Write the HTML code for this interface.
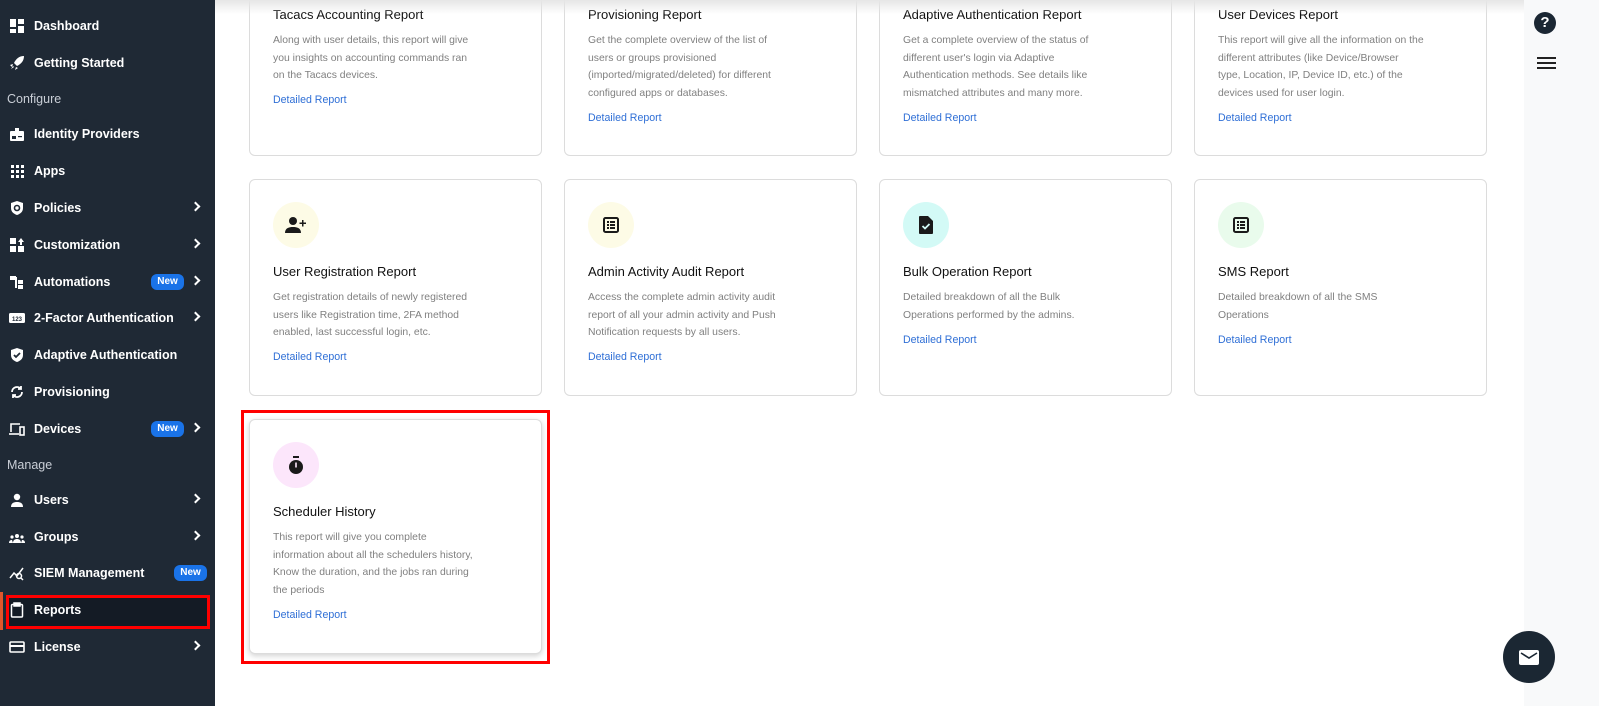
<!DOCTYPE html>
<html><head><meta charset="utf-8">
<style>
*{margin:0;padding:0;box-sizing:border-box}
body{width:1599px;height:706px;overflow:hidden;background:#fff;font-family:"Liberation Sans",sans-serif;position:relative}
.sb{position:absolute;left:0;top:0;width:215px;height:706px;background:#1f2935}
.it{position:absolute;left:0;width:215px;height:30px;color:#fff;font-size:12.5px;font-weight:bold;line-height:30px}
.it .tx{position:absolute;left:34px;top:0}
.it .ic{position:absolute;left:9px;top:7px;width:16px;height:16px}
.it .ch{position:absolute;left:192px;top:10px;width:7px;height:7px;border-right:2px solid #fff;border-top:2px solid #fff;transform:rotate(45deg)}
.new{position:absolute;top:7px;width:33px;height:16px;border-radius:6px;background:#1a73e8;color:#fff;font-size:10px;line-height:16px;text-align:center;font-weight:bold}
.sec{position:absolute;left:7px;color:#c9ced6;font-size:12.5px}
.card{position:absolute;width:293px;border:1px solid #dcdcdc;border-radius:6px;background:#fff;padding-left:23px}
.card .icn{margin-top:22px;width:46px;height:46px;border-radius:50%;display:flex;align-items:center;justify-content:center}
.card h3{margin-top:15px;font-size:13px;font-weight:normal;color:#111;line-height:18px;white-space:nowrap}
.card p{margin-top:8px;font-size:10.4px;color:#808080;line-height:17.5px;white-space:nowrap}
.card a{display:block;margin-top:7.75px;font-size:10.6px;color:#2f6fd6;line-height:17px;text-decoration:none}
.topsh{position:absolute;left:215px;top:0;width:1309px;height:14px;background:linear-gradient(#e6e6e6,rgba(255,255,255,0));}
.right{position:absolute;left:1524px;top:0;width:75px;height:706px;background:#f8f9fa}
</style></head><body>
<div class="sb">
 <div class="it" style="top:11px"><svg class="ic" viewBox="0 0 16 16"><rect x="1" y="1" width="6" height="8" fill="#fff"/><rect x="9" y="1" width="6" height="5" fill="#fff"/><rect x="1" y="11" width="6" height="4" fill="#fff"/><rect x="9" y="8" width="6" height="7" fill="#fff"/></svg><span class="tx">Dashboard</span></div>
 <div class="it" style="top:48px"><svg class="ic" viewBox="0 0 16 16"><path d="M15 1C10 1 7 4 5 8l3 3c4-2 7-5 7-10zM4 9l-3 1 2 2zM7 12l-1 3 3-2zM2 14l2-3 1 1z" fill="#fff"/></svg><span class="tx">Getting Started</span></div>
 <div class="sec" style="top:92px">Configure</div>
 <div class="it" style="top:119px"><svg class="ic" viewBox="0 0 16 16"><rect x="1" y="5" width="14" height="10" rx="1" fill="#fff"/><rect x="6" y="2" width="4" height="5" fill="#fff"/><rect x="3" y="10" width="4" height="3" fill="#1f2935"/><rect x="9" y="10" width="4" height="1.2" fill="#1f2935"/></svg><span class="tx">Identity Providers</span></div>
 <div class="it" style="top:156px"><svg class="ic" viewBox="0 0 16 16" fill="#fff"><rect x="2" y="2" width="3" height="3"/><rect x="7" y="2" width="3" height="3"/><rect x="12" y="2" width="3" height="3"/><rect x="2" y="7" width="3" height="3"/><rect x="7" y="7" width="3" height="3"/><rect x="12" y="7" width="3" height="3"/><rect x="2" y="12" width="3" height="3"/><rect x="7" y="12" width="3" height="3"/><rect x="12" y="12" width="3" height="3"/></svg><span class="tx">Apps</span></div>
 <div class="it" style="top:193px"><svg class="ic" viewBox="0 0 16 16"><path d="M8 1l6 2v5c0 4-3 6-6 7-3-1-6-3-6-7V3z" fill="#fff"/><circle cx="8" cy="8" r="2.5" fill="none" stroke="#1f2935" stroke-width="1.6"/></svg><span class="tx">Policies</span><span class="ch"></span></div>
 <div class="it" style="top:230px"><svg class="ic" viewBox="0 0 16 16" fill="#fff"><rect x="1" y="1" width="6" height="6"/><rect x="1" y="9" width="6" height="6"/><rect x="9" y="9" width="6" height="6"/><path d="M12 1l3 4h-6z"/><rect x="11" y="4" width="2" height="4"/></svg><span class="tx">Customization</span><span class="ch"></span></div>
 <div class="it" style="top:267px"><svg class="ic" viewBox="0 0 16 16" fill="#fff"><rect x="1" y="2" width="6" height="4"/><rect x="9" y="6" width="5" height="4"/><rect x="9" y="11" width="5" height="4"/><rect x="6" y="3" width="2" height="11"/></svg><span class="tx">Automations</span><span class="new" style="left:151px">New</span><span class="ch"></span></div>
 <div class="it" style="top:303px"><svg class="ic" viewBox="0 0 16 16"><rect x="0" y="3" width="16" height="10" rx="1.5" fill="#fff"/><text x="8" y="11" font-size="6" text-anchor="middle" fill="#1f2935" font-family="Liberation Sans" font-weight="bold">123</text></svg><span class="tx">2-Factor Authentication</span><span class="ch"></span></div>
 <div class="it" style="top:340px"><svg class="ic" viewBox="0 0 16 16"><path d="M8 1l6 2v5c0 4-3 6-6 7-3-1-6-3-6-7V3z" fill="#fff"/><path d="M5 8l2 2 4-4" stroke="#1f2935" stroke-width="1.8" fill="none"/></svg><span class="tx">Adaptive Authentication</span></div>
 <div class="it" style="top:377px"><svg class="ic" viewBox="0 0 16 16" fill="none" stroke="#fff" stroke-width="1.8"><path d="M3 8a5 5 0 0 1 9-3M13 8a5 5 0 0 1-9 3"/><path d="M12 2v3H9M4 14v-3h3"/></svg><span class="tx">Provisioning</span></div>
 <div class="it" style="top:414px"><svg class="ic" viewBox="0 0 16 16" fill="none" stroke="#fff" stroke-width="1.6"><path d="M2 11V3h9"/><path d="M0 13h10"/><rect x="11" y="6" width="4" height="8"/></svg><span class="tx">Devices</span><span class="new" style="left:151px">New</span><span class="ch"></span></div>
 <div class="sec" style="top:458px">Manage</div>
 <div class="it" style="top:485px"><svg class="ic" viewBox="0 0 16 16" fill="#fff"><circle cx="8" cy="5" r="3.2"/><path d="M2 15c0-4 3-5 6-5s6 1 6 5z"/></svg><span class="tx">Users</span><span class="ch"></span></div>
 <div class="it" style="top:522px"><svg class="ic" viewBox="0 0 16 16" fill="#fff"><circle cx="8" cy="7" r="2"/><circle cx="3" cy="8" r="1.6"/><circle cx="13" cy="8" r="1.6"/><path d="M4 14c0-3 2-4 4-4s4 1 4 4zM0 14c0-2 1-3 3-3l1 3zM16 14c0-2-1-3-3-3l-1 3z"/></svg><span class="tx">Groups</span><span class="ch"></span></div>
 <div class="it" style="top:558px"><svg class="ic" viewBox="0 0 16 16" fill="none" stroke="#fff" stroke-width="1.5"><path d="M1 13l4-5 3 3 6-8"/><circle cx="10" cy="11" r="2.5"/><path d="M12 13l2 2"/></svg><span class="tx">SIEM Management</span><span class="new" style="left:174px">New</span></div>
 <div style="position:absolute;left:0;top:592px;width:3px;height:38px;background:#e0562b"></div>
 <div style="position:absolute;left:6px;top:595px;width:204px;height:34px;background:#141b25;border:3px solid #f00"></div>
 <div class="it" style="top:595px"><svg class="ic" viewBox="0 0 16 16" fill="none" stroke="#fff" stroke-width="1.5"><rect x="2.5" y="2.5" width="11" height="12.5" rx="1"/><rect x="5" y="1" width="6" height="3" fill="#fff"/></svg><span class="tx">Reports</span></div>
 <div class="it" style="top:632px"><svg class="ic" viewBox="0 0 16 16" fill="none" stroke="#fff" stroke-width="1.6"><rect x="1" y="3" width="14" height="10" rx="1"/><path d="M1 7h14" stroke-width="2"/></svg><span class="tx">License</span><span class="ch"></span></div>
</div>

<div class="card" style="left:249px;top:-78px;height:234px"><div class="icn" style="visibility:hidden"></div><h3>Tacacs Accounting Report</h3><p>Along with user details, this report will give<br>you insights on accounting commands ran<br>on the Tacacs devices.</p><a>Detailed Report</a></div>
<div class="card" style="left:564px;top:-78px;height:234px"><div class="icn" style="visibility:hidden"></div><h3>Provisioning Report</h3><p>Get the complete overview of the list of<br>users or groups provisioned<br>(imported/migrated/deleted) for different<br>configured apps or databases.</p><a>Detailed Report</a></div>
<div class="card" style="left:879px;top:-78px;height:234px"><div class="icn" style="visibility:hidden"></div><h3>Adaptive Authentication Report</h3><p>Get a complete overview of the status of<br>different user's login via Adaptive<br>Authentication methods. See details like<br>mismatched attributes and many more.</p><a>Detailed Report</a></div>
<div class="card" style="left:1194px;top:-78px;height:234px"><div class="icn" style="visibility:hidden"></div><h3>User Devices Report</h3><p>This report will give all the information on the<br>different attributes (like Device/Browser<br>type, Location, IP, Device ID, etc.) of the<br>devices used for user login.</p><a>Detailed Report</a></div>

<div class="card" style="left:249px;top:179px;height:217px"><div class="icn" style="background:#fdfbe6"><svg width="22" height="18" viewBox="0 0 22 18" fill="#1a1a1a"><circle cx="8" cy="5" r="4"/><path d="M0 17c0-5 4-6 8-6s8 1 8 6z"/><path d="M17 4h1.5v2.5H21V8h-2.5v2.5H17V8h-2.5V6.5H17z"/></svg></div><h3>User Registration Report</h3><p>Get registration details of newly registered<br>users like Registration time, 2FA method<br>enabled, last successful login, etc.</p><a>Detailed Report</a></div>
<div class="card" style="left:564px;top:179px;height:217px"><div class="icn" style="background:#fdfbe6"><svg width="16" height="16" viewBox="0 0 16 16"><rect x="1" y="1" width="14" height="14" rx="1.5" fill="none" stroke="#1a1a1a" stroke-width="2"/><g fill="#1a1a1a"><rect x="4" y="4" width="2" height="2"/><rect x="7" y="4" width="5" height="2"/><rect x="4" y="7" width="2" height="2"/><rect x="7" y="7" width="5" height="2"/><rect x="4" y="10" width="2" height="2"/><rect x="7" y="10" width="5" height="2"/></g></svg></div><h3>Admin Activity Audit Report</h3><p>Access the complete admin activity audit<br>report of all your admin activity and Push<br>Notification requests by all users.</p><a>Detailed Report</a></div>
<div class="card" style="left:879px;top:179px;height:217px"><div class="icn" style="background:#d3faf6"><svg width="14" height="18" viewBox="0 0 14 18"><path d="M1 0h8l5 5v12a1 1 0 0 1-1 1H1a1 1 0 0 1-1-1V1a1 1 0 0 1 1-1z" fill="#1a1a1a"/><path d="M3.5 10l2.5 2.5 4.5-4.5" stroke="#d3faf6" stroke-width="1.8" fill="none"/></svg></div><h3>Bulk Operation Report</h3><p>Detailed breakdown of all the Bulk<br>Operations performed by the admins.</p><a>Detailed Report</a></div>
<div class="card" style="left:1194px;top:179px;height:217px"><div class="icn" style="background:#e9fbec"><svg width="16" height="16" viewBox="0 0 16 16"><rect x="1" y="1" width="14" height="14" rx="1.5" fill="none" stroke="#1a1a1a" stroke-width="2"/><g fill="#1a1a1a"><rect x="4" y="4" width="2" height="2"/><rect x="7" y="4" width="5" height="2"/><rect x="4" y="7" width="2" height="2"/><rect x="7" y="7" width="5" height="2"/><rect x="4" y="10" width="2" height="2"/><rect x="7" y="10" width="5" height="2"/></g></svg></div><h3>SMS Report</h3><p>Detailed breakdown of all the SMS<br>Operations</p><a>Detailed Report</a></div>

<div style="position:absolute;left:241px;top:410px;width:309px;height:254px;border:3px solid #f00"></div>
<div class="card" style="left:249px;top:419px;height:235px;box-shadow:0 2px 6px rgba(0,0,0,.18)"><div class="icn" style="background:#fce6fb"><svg width="16" height="18" viewBox="0 0 16 18"><rect x="5" y="0" width="6" height="2" fill="#1a1a1a"/><circle cx="8" cy="11" r="7" fill="#1a1a1a"/><rect x="7.2" y="6.5" width="1.6" height="5" fill="#fce6fb"/></svg></div><h3>Scheduler History</h3><p>This report will give you complete<br>information about all the schedulers history,<br>Know the duration, and the jobs ran during<br>the periods</p><a>Detailed Report</a></div>

<div class="topsh"></div>
<div class="right"></div>
<div style="position:absolute;left:1534px;top:12px;width:22px;height:22px;border-radius:50%;background:#1b2733;color:#fff;font-weight:bold;font-size:15px;line-height:22px;text-align:center">?</div>
<div style="position:absolute;left:1537px;top:57px;width:19px;height:2px;background:#222"></div>
<div style="position:absolute;left:1537px;top:62px;width:19px;height:2px;background:#222"></div>
<div style="position:absolute;left:1537px;top:67px;width:19px;height:2px;background:#222"></div>
<div style="position:absolute;left:1503px;top:631px;width:52px;height:52px;border-radius:50%;background:#1b2733;display:flex;align-items:center;justify-content:center"><svg width="20" height="15" viewBox="0 0 20 15"><rect x="0" y="0" width="20" height="15" rx="2" fill="#fff"/><path d="M2 3l8 5 8-5" stroke="#1b2733" stroke-width="1.6" fill="none"/></svg></div>
</body></html>
